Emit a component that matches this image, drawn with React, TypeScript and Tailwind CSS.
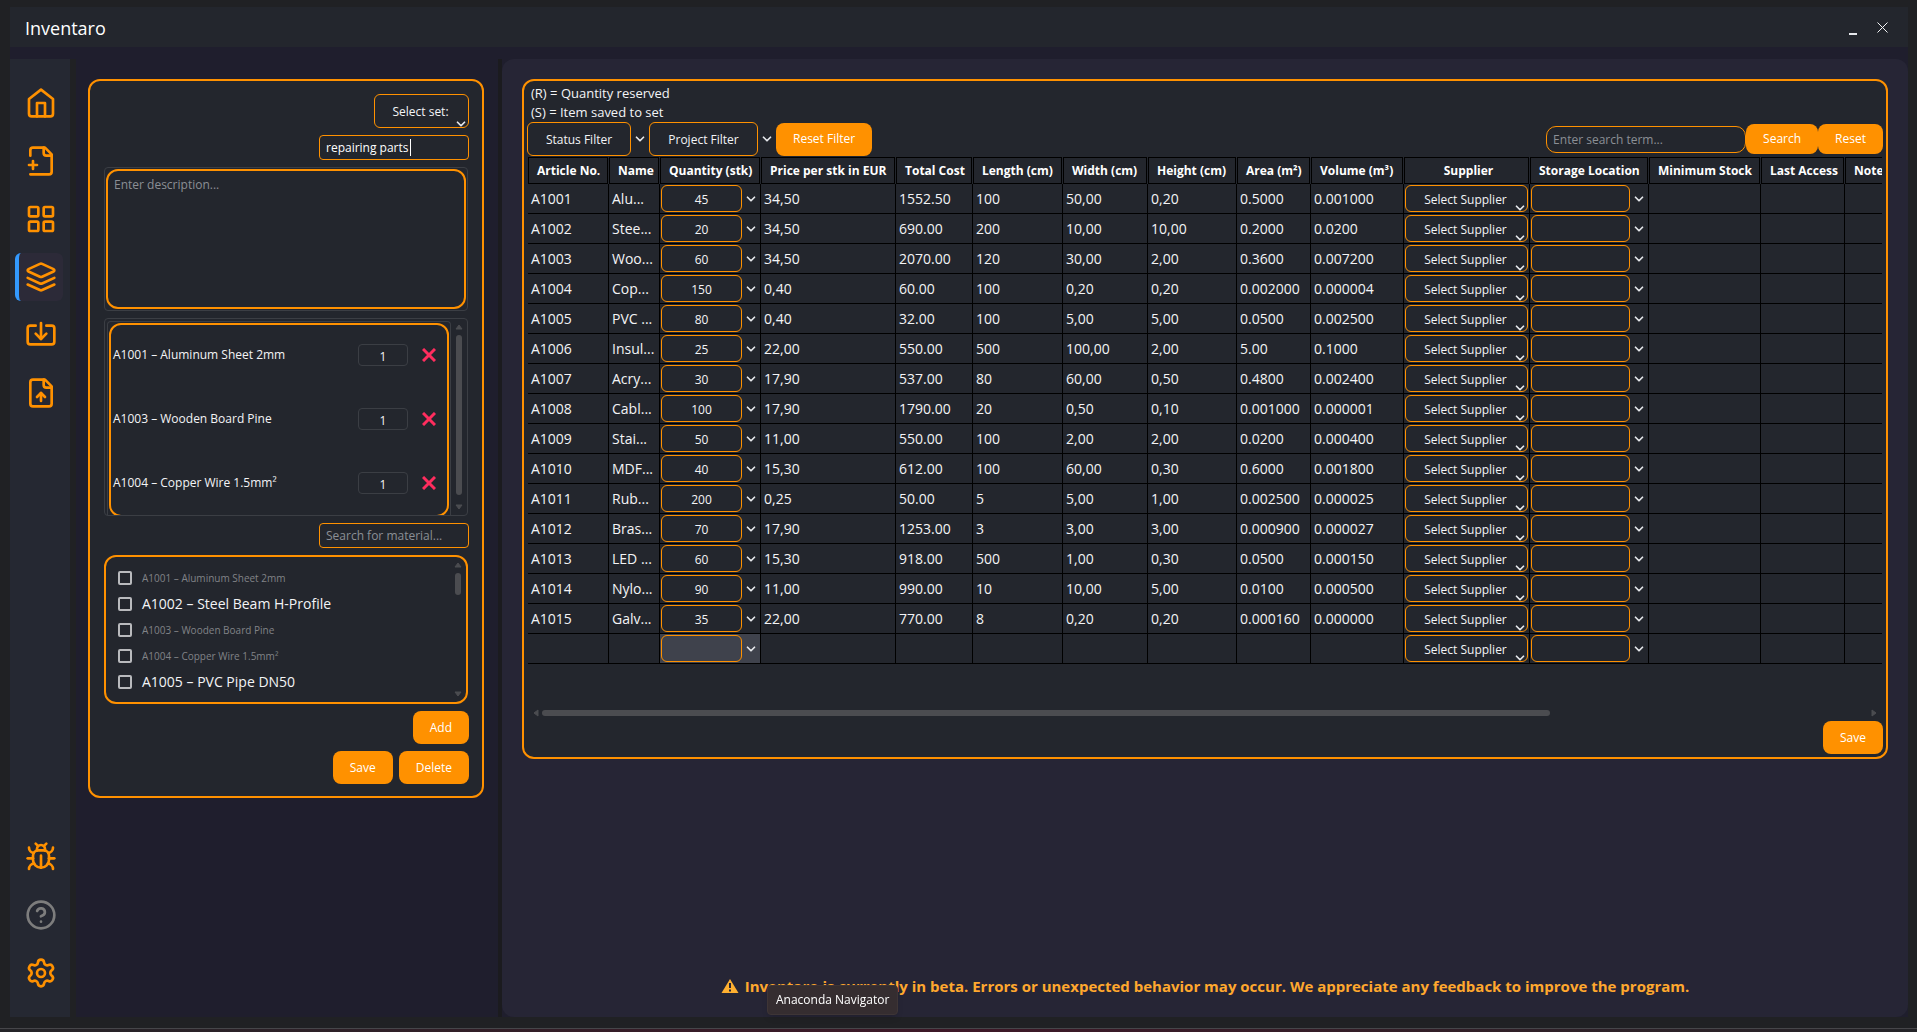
import type { ReactNode } from "react";
import { Bug, ChevronDown, Settings } from "lucide-react";

type NavItem = { label: string; icon: ReactNode; active?: boolean; muted?: boolean };

function Icon({ children }: { children: ReactNode }) {
  return (
    <svg
      className="h-8 w-8"
      viewBox="0 0 24 24"
      fill="none"
      stroke="currentColor"
      strokeWidth="2"
      strokeLinecap="round"
      strokeLinejoin="round"
      aria-hidden="true"
    >
      {children}
    </svg>
  );
}

const mainNav: NavItem[] = [
  {
    label: "Home",
    icon: (
      <Icon>
        <path d="m3 9 9-7 9 7v11a2 2 0 0 1-2 2H5a2 2 0 0 1-2-2z" />
        <path d="M9 22V12h6v10" />
      </Icon>
    ),
  },
  {
    label: "New project",
    icon: (
      <Icon>
        <path d="M4 22h14a2 2 0 0 0 2-2V7l-5-5H6a2 2 0 0 0-2 2v4" />
        <path d="M14 2v4a2 2 0 0 0 2 2h4" />
        <path d="M3 15h6" />
        <path d="M6 12v6" />
      </Icon>
    ),
  },
  {
    label: "Overview",
    icon: (
      <Icon>
        <rect width="7" height="7" x="3" y="3" rx="1" />
        <rect width="7" height="7" x="14" y="3" rx="1" />
        <rect width="7" height="7" x="14" y="14" rx="1" />
        <rect width="7" height="7" x="3" y="14" rx="1" />
      </Icon>
    ),
  },
  {
    label: "Materials",
    active: true,
    icon: (
      <Icon>
        <path d="m12.83 2.18a2 2 0 0 0-1.66 0L2.6 6.08a1 1 0 0 0 0 1.83l8.58 3.91a2 2 0 0 0 1.66 0l8.58-3.9a1 1 0 0 0 0-1.83Z" />
        <path d="m22 17.65-9.17 4.16a2 2 0 0 1-1.66 0L2 17.65" />
        <path d="m22 12.65-9.17 4.16a2 2 0 0 1-1.66 0L2 12.65" />
      </Icon>
    ),
  },
  {
    label: "Import",
    icon: (
      <Icon>
        <path d="M12 3v12" />
        <path d="m8 11 4 4 4-4" />
        <path d="M8 5H4a2 2 0 0 0-2 2v10a2 2 0 0 0 2 2h16a2 2 0 0 0 2-2V7a2 2 0 0 0-2-2h-4" />
      </Icon>
    ),
  },
  {
    label: "Export",
    icon: (
      <Icon>
        <path d="M15 2H6a2 2 0 0 0-2 2v16a2 2 0 0 0 2 2h12a2 2 0 0 0 2-2V7Z" />
        <path d="M14 2v4a2 2 0 0 0 2 2h4" />
        <path d="M12 12v6" />
        <path d="m15 15-3-3-3 3" />
      </Icon>
    ),
  },
];

const footerNav: NavItem[] = [
  { label: "Report a bug", icon: <Bug className="h-8 w-8" /> },
  {
    label: "Help",
    muted: true,
    icon: (
      <Icon>
        <circle cx="12" cy="12" r="10" />
        <path d="M9.09 9a3 3 0 0 1 5.83 1c0 2-3 3-3 3" />
        <path d="M12 17h.01" />
      </Icon>
    ),
  },
  { label: "Settings", icon: <Settings className="h-8 w-8" /> },
];

const setItems = ["A1001 – Aluminum Sheet 2mm", "A1003 – Wooden Board Pine", "A1004 – Copper Wire 1.5mm²"];

const materials = [
  { name: "A1001 – Aluminum Sheet 2mm", used: true },
  { name: "A1002 – Steel Beam H-Profile", used: false },
  { name: "A1003 – Wooden Board Pine", used: true },
  { name: "A1004 – Copper Wire 1.5mm²", used: true },
  { name: "A1005 – PVC Pipe DN50", used: false },
];

const columns = [
  { title: "Article No.", width: "w-[81px]" },
  { title: "Name", width: "w-[51px]" },
  { title: "Quantity (stk)", width: "w-[101px]" },
  { title: "Price per stk in EUR", width: "w-[135px]" },
  { title: "Total Cost", width: "w-[77px]" },
  { title: "Length (cm)", width: "w-[90px]" },
  { title: "Width (cm)", width: "w-[85px]" },
  { title: "Height (cm)", width: "w-[89px]" },
  { title: "Area (m²)", width: "w-[74px]" },
  { title: "Volume (m³)", width: "w-[93px]" },
  { title: "Supplier", width: "w-[126px]" },
  { title: "Storage Location", width: "w-[119px]" },
  { title: "Minimum Stock", width: "w-[112px]" },
  { title: "Last Access", width: "w-[84px]" },
  { title: "Notes", width: "w-[60px]" },
];

// article, name, quantity, price, total, length, width, height, area, volume
const rows = [
  ["A1001", "Alu...", "45", "34,50", "1552.50", "100", "50,00", "0,20", "0.5000", "0.001000"],
  ["A1002", "Stee...", "20", "34,50", "690.00", "200", "10,00", "10,00", "0.2000", "0.0200"],
  ["A1003", "Woo...", "60", "34,50", "2070.00", "120", "30,00", "2,00", "0.3600", "0.007200"],
  ["A1004", "Cop...", "150", "0,40", "60.00", "100", "0,20", "0,20", "0.002000", "0.000004"],
  ["A1005", "PVC ...", "80", "0,40", "32.00", "100", "5,00", "5,00", "0.0500", "0.002500"],
  ["A1006", "Insul...", "25", "22,00", "550.00", "500", "100,00", "2,00", "5.00", "0.1000"],
  ["A1007", "Acry...", "30", "17,90", "537.00", "80", "60,00", "0,50", "0.4800", "0.002400"],
  ["A1008", "Cabl...", "100", "17,90", "1790.00", "20", "0,50", "0,10", "0.001000", "0.000001"],
  ["A1009", "Stai...", "50", "11,00", "550.00", "100", "2,00", "2,00", "0.0200", "0.000400"],
  ["A1010", "MDF...", "40", "15,30", "612.00", "100", "60,00", "0,30", "0.6000", "0.001800"],
  ["A1011", "Rub...", "200", "0,25", "50.00", "5", "5,00", "1,00", "0.002500", "0.000025"],
  ["A1012", "Bras...", "70", "17,90", "1253.00", "3", "3,00", "3,00", "0.000900", "0.000027"],
  ["A1013", "LED ...", "60", "15,30", "918.00", "500", "1,00", "0,30", "0.0500", "0.000150"],
  ["A1014", "Nylo...", "90", "11,00", "990.00", "10", "10,00", "5,00", "0.0100", "0.000500"],
  ["A1015", "Galv...", "35", "22,00", "770.00", "8", "0,20", "0,20", "0.000160", "0.000000"],
  ["", "", "", "", "", "", "", "", "", ""],
];

function NavButton({ item }: { item: NavItem }) {
  return (
    <button
      type="button"
      aria-label={item.label}
      className={`flex h-12 w-12 items-center justify-center ${
        item.active ? "rounded-md border-l-4 border-[#3399ff] bg-[#2c2a38]" : "pl-1"
      } ${item.muted ? "text-[#7d7d7d]" : "text-[#ff9100]"}`}
    >
      {item.icon}
    </button>
  );
}

function OrangeButton({ children, compact }: { children: ReactNode; compact?: boolean }) {
  return (
    <button
      type="button"
      className={`rounded-lg bg-[#ff9100] px-[17px] text-xs text-white ${compact ? "h-[30px]" : "h-[33px]"}`}
    >
      {children}
    </button>
  );
}

function Arrow({ direction }: { direction: "up" | "down" | "left" | "right" }) {
  const shapes = {
    up: "M1 6 4 2l3 4z",
    down: "M1 2h6L4 6z",
    left: "M6 1v6L2 4z",
    right: "M2 1v6l4-3z",
  };
  return (
    <svg className="h-2 w-2 shrink-0 fill-[#4b4c50]" viewBox="0 0 8 8" aria-hidden="true">
      <path d={shapes[direction]} stroke="#4b4c50" strokeLinejoin="round" />
    </svg>
  );
}

/* Combo box whose chevron sits to the right of its frame */
function ComboBox({ label, value, selected }: { label: string; value: string; selected?: boolean }) {
  return (
    <div className={`flex h-[29px] items-center pl-px ${selected ? "bg-[#3f424c]" : ""}`}>
      <select
        aria-label={label}
        className="h-[27px] min-w-0 flex-1 appearance-none rounded-md border border-[#ff9100] pt-0.5 text-center text-xs text-gray-100 [text-align-last:center]"
      >
        <option>{value}</option>
      </select>
      <ChevronDown className="mx-0.5 h-3.5 w-3.5 shrink-0 text-gray-200" strokeWidth={3} />
    </div>
  );
}

/* Combo box whose chevron overlaps the lower right corner */
function CornerSelect({ label, value, className }: { label: string; value: string; className: string }) {
  return (
    <div className={`relative ${className}`}>
      <select
        aria-label={label}
        className="h-full w-full appearance-none rounded-md border border-[#ff9100] pt-0.5 pr-0.5 text-center text-xs text-gray-100 [text-align-last:center]"
      >
        <option>{value}</option>
      </select>
      <ChevronDown
        className="pointer-events-none absolute right-px -bottom-[3px] h-3.5 w-3.5 text-gray-200"
        strokeWidth={3}
      />
    </div>
  );
}

function TitleBar() {
  return (
    <header className="flex h-10 items-center justify-between bg-[#23262d] pr-5 pl-[15px]">
      <h1 className="pt-0.5 text-lg text-white">Inventaro</h1>
      <div className="flex items-center gap-5 text-gray-100">
        <button type="button" aria-label="Minimize" className="flex h-4 w-2 items-end">
          <span className="h-0.5 w-2 bg-gray-200" />
        </button>
        <button type="button" aria-label="Close">
          <svg className="h-[11px] w-[11px]" viewBox="0 0 11 11" stroke="currentColor" aria-hidden="true">
            <path d="m0.500.5 10 10M10.500.5l-10 10" />
          </svg>
        </button>
      </div>
    </header>
  );
}

function SetEditor() {
  return (
    <section className="flex flex-col gap-[7px] rounded-xl border-2 border-[#ff9100] bg-[#23262d] pt-[13px] pr-[13px] pb-3 pl-[14px]">
      <CornerSelect label="Select set" value="Select set:" className="h-[34px] w-[95px] self-end" />
      <div className="relative self-end">
        <input
          aria-label="Set name"
          defaultValue="repairing parts"
          className="block h-[25px] w-[150px] rounded border border-[#ff9100] px-1.5 text-xs text-white"
        />
        <span className="absolute top-1 left-[91px] h-[17px] w-px bg-white" />
      </div>

      <div className="mr-px h-36 rounded border border-[#3b3e44] p-px">
        <textarea
          aria-label="Description"
          placeholder="Enter description..."
          className="block h-full w-full resize-none rounded-xl border-2 border-[#ff9100] px-1.5 py-1.5 text-xs placeholder:text-[#8b8f95]"
        />
      </div>

      <div className="mr-px flex h-[198px] rounded border border-[#3b3e44] pl-0.5">
        <div className="mt-0.5 flex-1 overflow-hidden rounded-t border border-b-0 border-[#3b3e44] p-px">
          <ul className="flex h-[194px] flex-col gap-[42px] rounded-xl border-2 border-[#ff9100] pt-[19px] pl-0.5">
            {setItems.map((item) => (
              <li key={item} className="flex h-[22px] shrink-0 items-center pr-[11px] text-xs text-gray-100">
                <span className="flex-1">{item}</span>
                <input
                  aria-label={`Amount of ${item}`}
                  defaultValue="1"
                  className="h-[22px] w-[50px] rounded border border-[#3b3e44] pt-0.5 text-center text-xs"
                />
                <button type="button" aria-label={`Remove ${item}`} className="ml-3.5">
                  <svg className="h-3.5 w-3.5" viewBox="0 0 14 14" stroke="#ff2d5e" strokeWidth="3" aria-hidden="true">
                    <path d="m1 1 12 12M13 1 1 13" />
                  </svg>
                </button>
              </li>
            ))}
          </ul>
        </div>
        <div className="flex w-4 flex-col items-center gap-1 py-1">
          <Arrow direction="up" />
          <div className="h-40 w-1.5 rounded-full bg-[#4b4c50]" />
          <div className="mt-auto">
            <Arrow direction="down" />
          </div>
        </div>
      </div>

      <input
        type="search"
        aria-label="Search for material"
        placeholder="Search for material..."
        className="h-[25px] w-[150px] self-end rounded border border-[#ff9100] px-1.5 text-xs placeholder:text-[#8b8f95]"
      />

      <div className="mr-px flex h-[149px] justify-between rounded-xl border-2 border-[#ff9100] pr-1 pl-3">
        <ul className="pt-2">
          {materials.map((material) => (
            <li key={material.name}>
              <label className="flex h-[26px] items-center gap-2.5">
                <input
                  type="checkbox"
                  className="h-3.5 w-3.5 appearance-none rounded-xs border-2 border-[#b9babd] checked:bg-[#ff9100]"
                />
                <span className={material.used ? "text-[10px] text-[#818387]" : "text-sm text-gray-100"}>
                  {material.name}
                </span>
              </label>
            </li>
          ))}
        </ul>
        <div className="flex flex-col items-center gap-1 py-1">
          <Arrow direction="up" />
          <div className="h-[22px] w-1.5 rounded-full bg-[#4b4c50]" />
          <div className="mt-auto">
            <Arrow direction="down" />
          </div>
        </div>
      </div>

      <div className="flex justify-end">
        <OrangeButton>Add</OrangeButton>
      </div>
      <div className="flex justify-end gap-1.5">
        <OrangeButton>Save</OrangeButton>
        <OrangeButton>Delete</OrangeButton>
      </div>
    </section>
  );
}

function FilterSelect({ label, className }: { label: string; className: string }) {
  return (
    <div className="flex items-center">
      <select
        aria-label={label}
        className={`h-[34px] appearance-none rounded-md border border-[#ff9100] pt-0.5 text-center text-xs text-gray-100 [text-align-last:center] ${className}`}
      >
        <option>{label}</option>
      </select>
      <ChevronDown className="mx-0.5 h-3.5 w-3.5 text-gray-200" strokeWidth={3} />
    </div>
  );
}

function InventoryTable() {
  return (
    <div className="overflow-hidden">
      <table className="w-full min-w-[1377px] table-fixed border-separate border-spacing-0 text-left">
        <thead>
          <tr>
            {columns.map((column) => (
              <th key={column.title} className={`p-0 pr-px ${column.width}`}>
                <div
                  className={`h-[27px] border border-black text-xs leading-[26px] font-bold whitespace-nowrap text-white ${
                    column.title === "Supplier" ? "pl-1 text-center" : "pl-2"
                  }`}
                >
                  {column.title}
                </div>
              </th>
            ))}
          </tr>
        </thead>
        <tbody>
          {rows.map((row, index) => (
            <tr key={index} className="h-[30px] text-sm text-gray-100">
              {row.map((cell, i) => (
                <td
                  key={i}
                  className={`border-r border-b border-black py-0 leading-5 whitespace-nowrap ${i === 2 ? "px-0" : "pl-[3px]"}`}
                >
                  {i === 2 ? <ComboBox label="Quantity" value={cell} selected={index === rows.length - 1} /> : cell}
                </td>
              ))}
              <td className="border-r border-b border-black p-0">
                <CornerSelect label="Supplier" value="Select Supplier" className="mr-px ml-px h-[27px]" />
              </td>
              <td className="border-r border-b border-black p-0">
                <ComboBox label="Storage location" value="" />
              </td>
              <td className="border-r border-b border-black" />
              <td className="border-r border-b border-black" />
              <td className="border-b border-black" />
            </tr>
          ))}
        </tbody>
      </table>
    </div>
  );
}

function Inventory() {
  return (
    <section className="rounded-xl border-2 border-[#ff9100] bg-[#23262d] p-[3px]">
      <div className="pl-1 text-[13px] leading-[19px] text-gray-100">
        <p>(R) = Quantity reserved</p>
        <p>(S) = Item saved to set</p>
      </div>
      <div className="flex items-center justify-between">
        <div className="flex items-center">
          <FilterSelect label="Status Filter" className="w-[104px]" />
          <FilterSelect label="Project Filter" className="w-[109px]" />
          <OrangeButton>Reset Filter</OrangeButton>
        </div>
        <div className="flex items-center">
          <input
            type="search"
            aria-label="Search term"
            placeholder="Enter search term..."
            className="h-[27px] w-[200px] rounded-[10px] border border-[#ff9100] px-1.5 text-xs placeholder:text-[#8b8f95]"
          />
          <OrangeButton compact>Search</OrangeButton>
          <OrangeButton compact>Reset</OrangeButton>
        </div>
      </div>
      <div className="pt-px pr-px pl-px">
        <InventoryTable />
        <div className="mt-[45px] flex items-center gap-0.5 px-1">
          <Arrow direction="left" />
          <div className="flex-1">
            <div className="h-1.5 w-[76%] rounded-full bg-[#4b4c50]" />
          </div>
          <Arrow direction="right" />
        </div>
      </div>
      <div className="flex justify-end pt-1">
        <OrangeButton>Save</OrangeButton>
      </div>
    </section>
  );
}

export default function App() {
  return (
    <div className="flex min-h-screen flex-col bg-[#202124] pt-[7px] font-['Open_Sans','Noto_Sans',sans-serif]">
      <div className="mr-[9px] ml-2.5 flex flex-1 flex-col bg-[#1f1e2d]">
        <TitleBar />
        <div className="mt-3 flex flex-1">
          <nav className="flex w-[66px] flex-col gap-2.5 border-r-6 border-[#202124] bg-[#252832] pt-5 pb-5 pl-[5px]">
            {mainNav.map((item) => (
              <NavButton key={item.label} item={item} />
            ))}
            <div className="mt-auto flex flex-col gap-2.5">
              {footerNav.map((item) => (
                <NavButton key={item.label} item={item} />
              ))}
            </div>
          </nav>

          <div className="w-[426px] shrink-0 border-r-4 border-[#1b1b1f] pt-5 pr-3.5 pl-3">
            <SetEditor />
          </div>

          <main className="flex min-w-0 flex-1 flex-col justify-between rounded-xl bg-[#262535] px-5 pt-5 pb-[19px]">
            <Inventory />
            <div className="flex items-center justify-center gap-1.5 text-[#ffa82e]">
              <svg className="h-4 w-[18px]" viewBox="0 0 18 16" aria-hidden="true">
                <path d="M9 1 17.500 15H.5z" fill="#ffb030" />
                <path d="M9 5v5M9 11.500v2" stroke="#262535" strokeWidth="2" />
              </svg>
              <p className="text-[15px] leading-6 font-bold">
                Inventaro is currently in beta. Errors or unexpected behavior may occur. We appreciate any feedback to
                improve the program.
              </p>
            </div>
          </main>
        </div>
      </div>
      <footer className="h-[15px] pt-[11px]">
        <div className="h-1 border-t border-[#46464a] bg-linear-to-r from-[#242428] via-[#3d1827] to-[#242428]" />
      </footer>

      {/* Taskbar hover hint */}
      <div
        role="tooltip"
        className="fixed bottom-[17px] left-[767px] flex h-[30px] items-center rounded border border-[#3e3536] bg-[#352d30] px-2 text-xs text-white shadow-md"
      >
        Anaconda Navigator
      </div>
    </div>
  );
}
